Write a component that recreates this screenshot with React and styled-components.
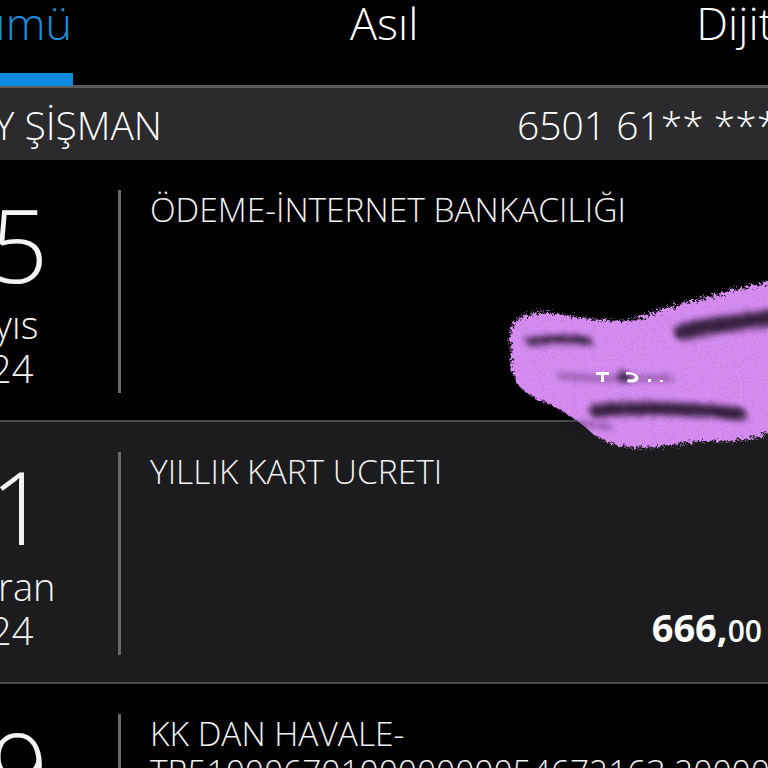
import styled, { createGlobalStyle } from "styled-components"

const Global = createGlobalStyle`
  html, body { margin: 0; padding: 0; background: #000; }
  body { width: 768px; height: 768px; overflow: hidden; }
  #root { width: 768px; height: 768px; overflow: hidden; }
`

const Screen = styled.div`
  width: 1152px;
  margin-left: -192px;
  background: #000;
  color: #fff;
  font-family: "Open Sans", "Noto Sans", sans-serif;
`
const Tabs = styled.nav`
  display: grid;
  grid-template-columns: 264px auto auto;
  justify-content: start;
  column-gap: 278px;
  height: 85px;
  border-bottom: 3px solid #5b5b5b;
  box-sizing: content-box;
`
const Tab = styled.div`
  position: relative;
  justify-self: ${p => (p.active ? "end" : "start")};
  height: 85px;
  font-size: 45px;
  font-weight: 300;
  font-stretch: 92%;
  line-height: 46px;
  white-space: nowrap;
  color: ${p => (p.active ? "#1b8fdd" : "#fff")};
`
const Indicator = styled.div`
  position: absolute;
  left: 0;
  right: -1px;
  bottom: -1px;
  height: 13px;
  background: #0c8ae0;
`
const Header = styled.div`
  display: grid;
  grid-template-columns: 354px 355px 1fr;
  align-items: center;
  height: 72px;
  background: #2b2b2d;
  font-size: 39px;
  font-weight: 300;
`
const Name = styled.span`
  text-align: right;
  white-space: nowrap;
`
const CardNo = styled.span`
  grid-column: 3;
  white-space: nowrap;
`
const Row = styled.div`
  position: relative;
  display: grid;
  grid-template-columns: 241px 3px 1fr;
  padding: 30px 198px 27px 69px;
  height: 203px;
  background: ${p => p.bg || "#000"};
  border-bottom: 2px solid #4c4c4e;
`
const DateCol = styled.div`
  display: flex;
  flex-direction: column;
  align-items: center;
  padding-right: 15px;
  font-weight: 300;
  font-stretch: 94%;
  color: #f4f4f4;
`
const Day = styled.span`
  font-size: 102px;
  line-height: 100px;
  margin-top: 4px;
`
const Month = styled.span`
  font-size: 38px;
  line-height: 44px;
  margin-top: 8px;
`
const Year = styled.span`
  font-size: 38px;
  line-height: 44px;
`
const Divider = styled.div`
  width: 3px;
  background: #6a6a6c;
`
const Body = styled.div`
  display: flex;
  flex-direction: column;
  justify-content: space-between;
  padding-left: 29px;
  min-width: 0;
`
const Title = styled.div`
  font-size: 33.5px;
  font-weight: 300;
  line-height: 38px;
  color: #f2f2f2;
  white-space: pre;
`
const Amount = styled.div`
  align-self: flex-end;
  font-size: 38px;
  font-weight: 700;
  line-height: 40px;
  margin-bottom: 4px;
  small { font-size: 30px; font-weight: 600; }
`
const Redaction = styled.svg`
  position: absolute;
  left: 692px;
  top: 115px;
  z-index: 2;
  overflow: visible;
`

const blob =
  "M12 55 C14 46 20 42 30 40 C50 34 62 42 80 43 C100 45 115 48 132 46 C150 40 170 32 195 26 C220 20 245 12 268 8 L300 2 L300 172 L268 157 C250 166 225 166 200 165 C180 168 160 172 138 172 C118 172 102 166 92 158 C80 146 66 138 48 128 C32 122 20 116 15 104 C10 90 10 68 12 55 Z"

const Scribble = () => (
  <Redaction width="300" height="180" viewBox="0 0 300 180">
    <defs>
      <filter id="rough" x="-10%" y="-10%" width="120%" height="120%">
        <feTurbulence type="fractalNoise" baseFrequency="0.3" numOctaves="3" seed="3" result="n" />
        <feDisplacementMap in="SourceGraphic" in2="n" scale="12" />
      </filter>
      <filter id="halo" x="-10%" y="-10%" width="120%" height="120%">
        <feTurbulence type="fractalNoise" baseFrequency="0.9" numOctaves="2" seed="5" result="n" />
        <feDisplacementMap in="SourceGraphic" in2="n" scale="18" />
      </filter>
      <filter id="soft" x="-20%" y="-80%" width="140%" height="260%">
        <feTurbulence type="fractalNoise" baseFrequency="0.7" numOctaves="3" seed="7" result="n" />
        <feDisplacementMap in="SourceGraphic" in2="n" scale="16" result="d" />
        <feGaussianBlur in="d" stdDeviation="2.4" />
      </filter>
      <filter id="grain" x="0" y="0" width="100%" height="100%">
        <feTurbulence type="fractalNoise" baseFrequency="1.1" numOctaves="2" seed="11" />
        <feColorMatrix values="0 0 0 0 0.1  0 0 0 0 0.04  0 0 0 0 0.13  0 0 0 -3 1.6" />
      </filter>
      <clipPath id="blobClip">
        <path d={blob} />
      </clipPath>
    </defs>
    <path d={blob} fill="#d88ef4" opacity="0.5" filter="url(#halo)" />
    <path d={blob} fill="#d88ef4" filter="url(#rough)" />
    <g clipPath="url(#blobClip)" opacity="0.18">
      <rect x="0" y="0" width="300" height="180" filter="url(#grain)" />
    </g>
    <g filter="url(#soft)" stroke="#1a0a22" strokeLinecap="round" fill="none" opacity="0.85">
      <path d="M30 67 C45 64 70 63 88 66" strokeWidth="8" />
      <path d="M182 57 C205 52 240 46 272 43" strokeWidth="16" />
      <path d="M96 136 C130 132 190 133 240 139" strokeWidth="13" />
      <path d="M60 101 C90 104 140 104 170 103" strokeWidth="6" opacity="0.4" />
      <path d="M70 150 C85 148 100 150 110 152" strokeWidth="5" opacity="0.45" />
      <circle cx="124" cy="102" r="6" fill="#1a0a22" stroke="none" />
    </g>
    <g fill="#fff">
      <rect x="96" y="97" width="13" height="3" />
      <rect x="101" y="97" width="3" height="10" />
      <path d="M126 97 C136 97 140 101 138 105 C136 108 130 108 127 107 L128 104 C132 105 135 104 135 102 C135 100 131 99 126 100 Z" />
      <rect x="148" y="104" width="3" height="3" />
      <rect x="160" y="105" width="3" height="2" />
    </g>
  </Redaction>
)

const rows = [
  { day: "15", month: "Mayıs", year: "2024", title: "ÖDEME-İNTERNET BANKACILIĞI", redacted: true },
  { day: "01", month: "Haziran", year: "2024", title: "YILLIK KART UCRETI", amount: "666", cents: "00", bg: "#1c1c1e" },
  { day: "09", month: "Haziran", year: "2024", title: "KK DAN HAVALE-\nTR5100067010000000054672163 20000" },
]

export default function App() {
  return (
    <Screen>
      <Global />
      <Tabs>
        <Tab active>
          Tümü
          <Indicator />
        </Tab>
        <Tab>Asıl</Tab>
        <Tab>Dijital</Tab>
      </Tabs>
      <Header>
        <Name>GÜNAY ŞİŞMAN</Name>
        <CardNo>6501 61** **** 4827</CardNo>
      </Header>
      {rows.map((r, i) => (
        <Row key={i} bg={r.bg}>
          <DateCol>
            <Day>{r.day}</Day>
            <Month>{r.month}</Month>
            <Year>{r.year}</Year>
          </DateCol>
          <Divider />
          <Body>
            <Title>{r.title}</Title>
            {r.amount && (
              <Amount>
                {r.amount},<small>{r.cents}</small>
              </Amount>
            )}
          </Body>
          {r.redacted && <Scribble />}
        </Row>
      ))}
    </Screen>
  )
}
